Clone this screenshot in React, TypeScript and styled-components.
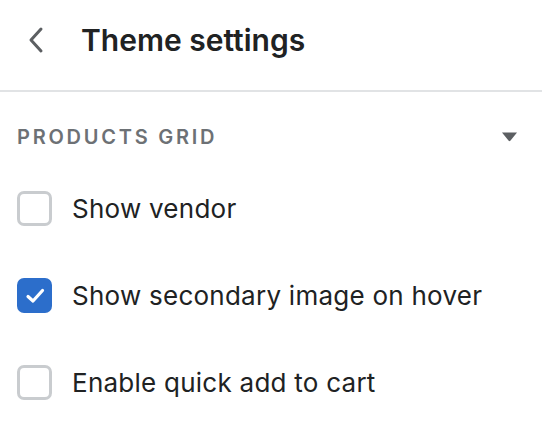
import React, { useState } from 'react';
import styled, { createGlobalStyle } from 'styled-components';

const GlobalStyle = createGlobalStyle`
  html, body {
    margin: 0;
    padding: 0;
    background: #ffffff;
  }
  body {
    font-family: 'Inter', 'Noto Sans', sans-serif;
    color: #202223;
  }
`;

const Panel = styled.div`
  width: 542px;
  height: 434px;
  background: #ffffff;
  overflow: hidden;
`;

const Header = styled.div`
  display: flex;
  align-items: center;
  height: 92px;
  padding: 0 0 10px 25px;
  border-bottom: 2px solid #e1e3e5;
  box-sizing: border-box;
`;

const BackButton = styled.button`
  appearance: none;
  border: none;
  background: transparent;
  padding: 0;
  margin: 0 36px 0 0;
  width: 20px;
  height: 28px;
  display: flex;
  align-items: center;
  justify-content: center;
  cursor: pointer;
`;

const Title = styled.h1`
  margin: 0;
  font-size: 30px;
  font-weight: 600;
  color: #202223;
`;

const Section = styled.section`
  padding: 0 24px 0 17px;
`;

const SectionHeader = styled.div`
  display: flex;
  align-items: center;
  justify-content: space-between;
  height: 88px;
  padding-top: 2px;
  box-sizing: border-box;
`;

const SectionTitle = styled.h2`
  margin: 0;
  font-size: 20px;
  font-weight: 600;
  color: #6d7175;
  letter-spacing: 2.75px;
  text-transform: uppercase;
`;

const OptionList = styled.div`
  display: flex;
  flex-direction: column;
  gap: 52px;
  padding-top: 11px;
`;

const Option = styled.label`
  display: flex;
  align-items: center;
  gap: 20px;
  cursor: pointer;
`;

const Box = styled.span<{ checked: boolean }>`
  width: 35px;
  height: 35px;
  box-sizing: border-box;
  border-radius: 7px;
  border: ${(props) => (props.checked ? 'none' : '3px solid #c9cccf')};
  background: ${(props) => (props.checked ? '#2c6ecb' : '#ffffff')};
  display: flex;
  align-items: center;
  justify-content: center;
  flex-shrink: 0;
`;

const OptionText = styled.span`
  font-size: 26px;
  letter-spacing: 0.25px;
  color: #202223;
`;

const options = [
  { id: 'vendor', label: 'Show vendor', checked: false },
  { id: 'secondary', label: 'Show secondary image on hover', checked: true },
  { id: 'quickadd', label: 'Enable quick add to cart', checked: false },
];

const App = () => {
  const [state, setState] = useState(options);

  const toggle = (id: string) =>
    setState((prev) => prev.map((o) => (o.id === id ? { ...o, checked: !o.checked } : o)));

  return (
    <Panel>
      <GlobalStyle />
      <Header>
        <BackButton aria-label="Back">
          <svg width="17" height="28" viewBox="0 0 17 28">
            <path d="M14 3 L4 14 L14 25" fill="none" stroke="#5c5f62" strokeWidth="3" strokeLinecap="round" strokeLinejoin="round" />
          </svg>
        </BackButton>
        <Title>Theme settings</Title>
      </Header>
      <Section>
        <SectionHeader>
          <SectionTitle>Products grid</SectionTitle>
          <svg width="17" height="10" viewBox="0 0 17 10">
            <path d="M1 0.5 H16 L9.3 8.8 Q8.5 9.7 7.7 8.8 Z" fill="#5c5f62" />
          </svg>
        </SectionHeader>
        <OptionList>
          {state.map((o) => (
            <Option key={o.id} onClick={() => toggle(o.id)}>
              <Box checked={o.checked}>
                {o.checked ? (
                  <svg width="22" height="18" viewBox="0 0 22 18">
                    <path d="M4 9.5 L9 14 L18.5 3.5" fill="none" stroke="#ffffff" strokeWidth="3.2" strokeLinecap="round" strokeLinejoin="round" />
                  </svg>
                ) : null}
              </Box>
              <OptionText>{o.label}</OptionText>
            </Option>
          ))}
        </OptionList>
      </Section>
    </Panel>
  );
};

export default App;
